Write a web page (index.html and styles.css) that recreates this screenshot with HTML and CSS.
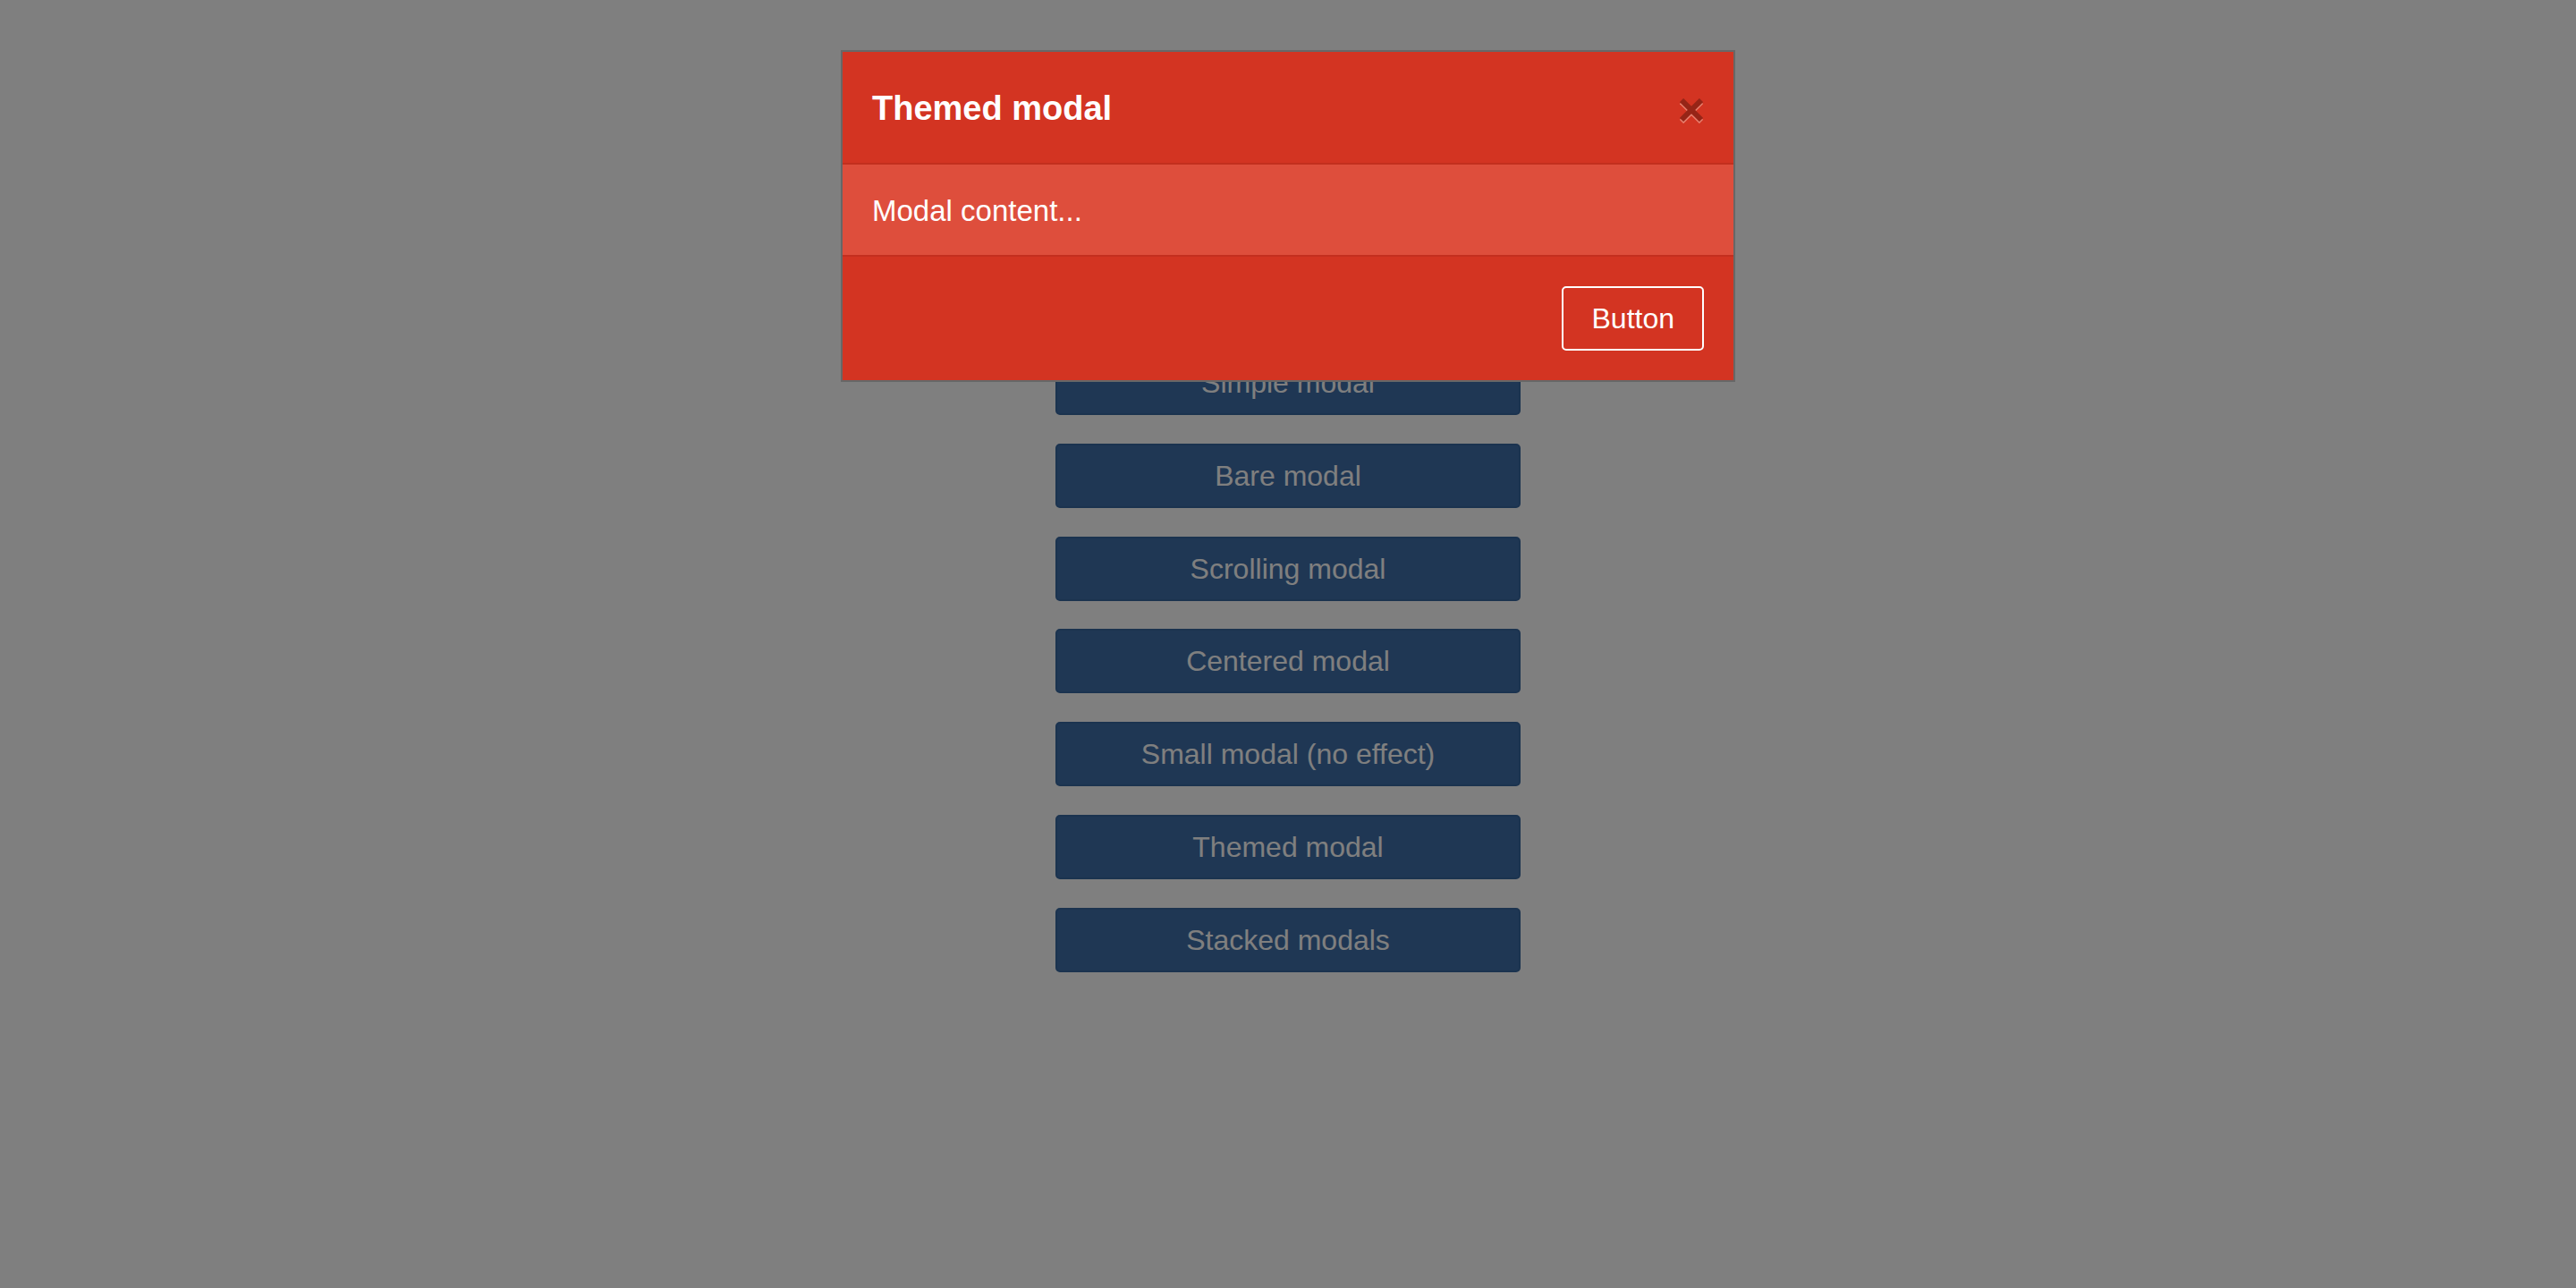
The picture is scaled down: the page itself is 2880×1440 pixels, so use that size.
FILE: index.html
```html
<!DOCTYPE html>
<html lang="en">
<head>
<meta charset="utf-8">
<title>Modals</title>
<link rel="stylesheet" href="styles.css">
</head>
<body>
<main class="demo-list">
  <button class="demo-btn" type="button">Simple modal</button>
  <button class="demo-btn" type="button">Bare modal</button>
  <button class="demo-btn" type="button">Scrolling modal</button>
  <button class="demo-btn" type="button">Centered modal</button>
  <button class="demo-btn" type="button">Small modal (no effect)</button>
  <button class="demo-btn" type="button">Themed modal</button>
  <button class="demo-btn" type="button">Stacked modals</button>
</main>

<div class="overlay">
  <div class="modal" role="dialog" aria-labelledby="modal-title">
    <header class="modal-header">
      <h2 class="modal-title" id="modal-title">Themed modal</h2>
      <button class="modal-close" type="button" aria-label="Close">
        <svg class="close-icon" width="26" height="28" viewBox="0 0 26 28" aria-hidden="true">
          <g stroke="#e8806f" stroke-width="6" stroke-linecap="butt" transform="translate(0 2)">
            <line x1="2" y1="2" x2="24" y2="24"/>
            <line x1="24" y1="2" x2="2" y2="24"/>
          </g>
          <g stroke="#962517" stroke-width="6" stroke-linecap="butt">
            <line x1="2" y1="2" x2="24" y2="24"/>
            <line x1="24" y1="2" x2="2" y2="24"/>
          </g>
        </svg>
      </button>
    </header>
    <div class="modal-body">Modal content...</div>
    <footer class="modal-footer">
      <button class="modal-btn" type="button">Button</button>
    </footer>
  </div>
</div>
</body>
</html>
```

FILE: styles.css
```css
* {
  box-sizing: border-box;
}

html, body {
  margin: 0;
  padding: 0;
}

body {
  background: #ffffff;
  font-family: "Liberation Sans", Arial, Helvetica, sans-serif;
  min-height: 1440px;
}

.demo-list {
  display: flex;
  flex-direction: column;
  align-items: center;
  gap: 31.8px;
  padding-top: 392px;
}

.demo-btn {
  width: 520px;
  height: 72px;
  margin: 0;
  padding: 0;
  background: #3e6ea8;
  border: 2px solid #37669f;
  border-radius: 5px;
  color: #ffffff;
  font-family: "Liberation Sans", Arial, Helvetica, sans-serif;
  font-size: 32px;
  line-height: 1;
}

.overlay {
  position: fixed;
  inset: 0;
  background: rgba(0, 0, 0, 0.5);
  padding-top: 56px;
}

.modal {
  width: 1000px;
  margin: 0 auto;
  border: 2px solid #676767;
  background: #d33422;
  color: #ffffff;
}

.modal-header {
  display: flex;
  align-items: center;
  justify-content: space-between;
  padding: 41px 34px 39px 33px;
  border-bottom: 2px solid #c22f1e;
}

.modal-title {
  margin: 0;
  font-family: "Liberation Sans", Arial, Helvetica, sans-serif;
  font-size: 38px;
  font-weight: 700;
  line-height: 44px;
  color: #ffffff;
}

.modal-close {
  display: flex;
  margin: 6px 0 0 0;
  padding: 0;
  background: none;
  border: 0;
}

.close-icon {
  display: block;
}

.modal-body {
  background: #de4e3c;
  padding: 28px 34px 25px 33px;
  font-size: 33px;
  line-height: 48px;
  border-bottom: 2px solid #c42f1f;
}

.modal-footer {
  display: flex;
  justify-content: flex-end;
  padding: 33px 33px 33px 33px;
}

.modal-btn {
  height: 72px;
  margin: 0;
  padding: 0 31px;
  background: transparent;
  border: 2px solid #ffffff;
  border-radius: 5px;
  color: #ffffff;
  font-family: "Liberation Sans", Arial, Helvetica, sans-serif;
  font-size: 32px;
  line-height: 1;
}
```
